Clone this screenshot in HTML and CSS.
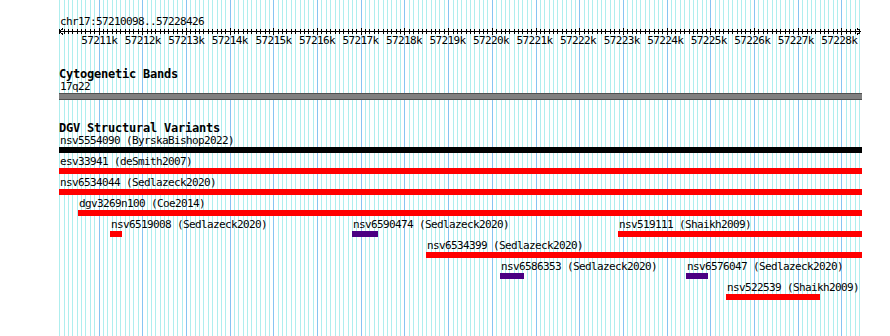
FILE: index.html
```html
<!DOCTYPE html>
<html>
<head>
<meta charset="utf-8">
<link rel="stylesheet" href="styles.css">
</head>
<body>
<div class="view">
  <svg class="grid" width="803" height="336">
    <defs>
      <g id="kb">
        <path class="mj" d="M0 0V336"/>
        <path class="mn" d="M100 0V336M200 0V336M300 0V336M400 0V336M500 0V336M600 0V336M700 0V336M800 0V336M900 0V336"/>
      </g>
      <g id="kbt">
        <path class="tk" d="M0 0V7"/>
        <path class="tk" d="M100 1V6M200 1V6M300 1V6M400 1V6M500 1V6M600 1V6M700 1V6M800 1V6M900 1V6"/>
      </g>
    </defs>
    <path class="mj" d="M0.5 0V336"/>
    <g transform="translate(0.6 0) scale(0.043704 1)">
      <use href="#kb" x="-98"/><use href="#kb" x="902"/><use href="#kb" x="1902"/><use href="#kb" x="2902"/>
      <use href="#kb" x="3902"/><use href="#kb" x="4902"/><use href="#kb" x="5902"/><use href="#kb" x="6902"/>
      <use href="#kb" x="7902"/><use href="#kb" x="8902"/><use href="#kb" x="9902"/><use href="#kb" x="10902"/>
      <use href="#kb" x="11902"/><use href="#kb" x="12902"/><use href="#kb" x="13902"/><use href="#kb" x="14902"/>
      <use href="#kb" x="15902"/><use href="#kb" x="16902"/><use href="#kb" x="17902"/>
    </g>
  </svg>

  <div class="content">
    <div class="ruler">
      <div class="small chrom">chr17:57210098..57228426</div>
      <svg class="axis" width="803" height="7">
        <path class="tk" d="M0 3.5H802"/>
        <path class="tk" d="M4 0.5L0.5 3.5L4 6.5M798 0.5L801.5 3.5L798 6.5"/>
        <g transform="translate(0.6 0) scale(0.043704 1)">
          <use href="#kbt" x="-98"/><use href="#kbt" x="902"/><use href="#kbt" x="1902"/><use href="#kbt" x="2902"/>
          <use href="#kbt" x="3902"/><use href="#kbt" x="4902"/><use href="#kbt" x="5902"/><use href="#kbt" x="6902"/>
          <use href="#kbt" x="7902"/><use href="#kbt" x="8902"/><use href="#kbt" x="9902"/><use href="#kbt" x="10902"/>
          <use href="#kbt" x="11902"/><use href="#kbt" x="12902"/><use href="#kbt" x="13902"/><use href="#kbt" x="14902"/>
          <use href="#kbt" x="15902"/><use href="#kbt" x="16902"/><use href="#kbt" x="17902"/>
        </g>
      </svg>
      <div class="small ticklabels">
        <span class="pad" style="flex-grow:402"></span>
        <span class="kl">57211k</span><span class="kl">57212k</span><span class="kl">57213k</span><span class="kl">57214k</span>
        <span class="kl">57215k</span><span class="kl">57216k</span><span class="kl">57217k</span><span class="kl">57218k</span>
        <span class="kl">57219k</span><span class="kl">57220k</span><span class="kl">57221k</span><span class="kl">57222k</span>
        <span class="kl">57223k</span><span class="kl">57224k</span><span class="kl">57225k</span><span class="kl">57226k</span>
        <span class="kl">57227k</span><span class="kl">57228k</span>
        <span class="pad" style="flex-grow:-74"></span>
      </div>
    </div>

    <div class="track cyto">
      <div class="title">Cytogenetic Bands</div>
      <div class="small label">17q22</div>
      <div class="band"></div>
    </div>

    <div class="track dgv">
      <div class="title">DGV Structural Variants</div>
      <div class="feats">
        <div class="feat" style="grid-column:1 / -1;grid-row:1"><div class="small label">nsv5554090 (ByrskaBishop2022)</div><div class="bar black"></div></div>
        <div class="feat" style="grid-column:1 / -1;grid-row:2"><div class="small label">esv33941 (deSmith2007)</div><div class="bar red"></div></div>
        <div class="feat" style="grid-column:1 / -1;grid-row:3"><div class="small label">nsv6534044 (Sedlazeck2020)</div><div class="bar red"></div></div>
        <div class="feat" style="grid-column:20 / -1;grid-row:4"><div class="small label">dgv3269n100 (Coe2014)</div><div class="bar red"></div></div>
        <div class="feat" style="grid-column:52 / 64;grid-row:5"><div class="small label">nsv6519008 (Sedlazeck2020)</div><div class="bar red"></div></div>
        <div class="feat" style="grid-column:294 / 320;grid-row:5"><div class="small label">nsv6590474 (Sedlazeck2020)</div><div class="bar indigo"></div></div>
        <div class="feat" style="grid-column:560 / -1;grid-row:5"><div class="small label">nsv519111 (Shaikh2009)</div><div class="bar red"></div></div>
        <div class="feat" style="grid-column:368 / -1;grid-row:6"><div class="small label">nsv6534399 (Sedlazeck2020)</div><div class="bar red"></div></div>
        <div class="feat" style="grid-column:442 / 466;grid-row:7"><div class="small label">nsv6586353 (Sedlazeck2020)</div><div class="bar indigo"></div></div>
        <div class="feat" style="grid-column:628 / 650;grid-row:7"><div class="small label">nsv6576047 (Sedlazeck2020)</div><div class="bar indigo"></div></div>
        <div class="feat" style="grid-column:668 / 762;grid-row:8"><div class="small label">nsv522539 (Shaikh2009)</div><div class="bar red"></div></div>
      </div>
    </div>
  </div>
</div>
</body>
</html>
```

FILE: styles.css
```css
html, body {
  margin: 0;
  padding: 0;
  background: #ffffff;
  overflow: hidden;
}
body {
  width: 890px;
  height: 336px;
}
.view {
  position: relative;
  margin-left: 59px;
  width: 803px;
  height: 336px;
}
.grid {
  position: absolute;
  top: 0;
  left: 0;
  display: block;
}
.grid .mj {
  stroke: #87c4f2;
  stroke-width: 1;
  vector-effect: non-scaling-stroke;
  shape-rendering: crispEdges;
}
.grid .mn {
  stroke: #afeeee;
  stroke-width: 1;
  vector-effect: non-scaling-stroke;
  shape-rendering: crispEdges;
}
.tk {
  stroke: #000000;
  stroke-width: 1;
  vector-effect: non-scaling-stroke;
  shape-rendering: crispEdges;
  fill: none;
}
.content {
  position: relative;
  color: #000000;
}
.small {
  font-family: "DejaVu Sans Mono", monospace;
  font-size: 11px;
  letter-spacing: -0.622px;
  line-height: 13px;
  white-space: nowrap;
}
.title {
  font-family: "DejaVu Sans Mono", monospace;
  font-weight: bold;
  font-size: 12px;
  letter-spacing: -0.224px;
  line-height: 11px;
  white-space: nowrap;
}
.ruler {
  padding-top: 15px;
  height: 35px;
}
.chrom {
  padding-left: 1px;
}
.axis {
  display: block;
}
.ticklabels {
  display: flex;
  width: 801px;
  margin-left: 1px;
  margin-top: -1px;
}
.ticklabels .pad {
  flex-basis: 0;
  flex-shrink: 0;
}
.ticklabels .kl {
  flex: 1000 0 0;
  min-width: 0;
  text-align: center;
}
.cyto {
  padding-top: 19px;
}
.cyto .label {
  padding-left: 1px;
}
.band {
  height: 5px;
  background: #808080;
  border-top: 1px solid #505050;
  border-bottom: 1px solid #505050;
}
.dgv {
  padding-top: 23px;
}
.feats {
  display: grid;
  grid-template-columns: repeat(803, 1px);
  grid-auto-rows: 21px;
}
.feat {
  min-width: 0;
}
.feat .label {
  padding-left: 1px;
}
.bar {
  height: 6px;
}
.red { background: #ff0000; }
.black { background: #000000; }
.indigo { background: #4b0082; }
```
